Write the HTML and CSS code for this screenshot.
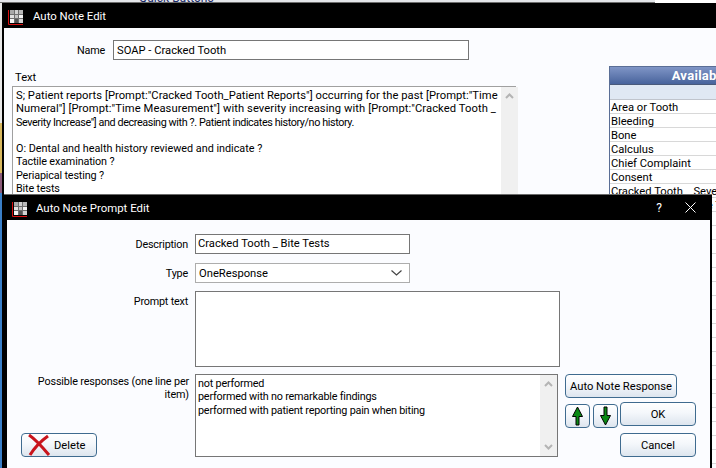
FILE: index.html
```html
<!DOCTYPE html>
<html>
	<head>
		<meta charset="UTF-8">
		<title>Auto Note Prompt Edit</title>
		<link rel="stylesheet" href="styles.css">
	</head>
	<body>
		<div class="desktop">
			<!--strip of the app behind the dialogs-->
			<div class="behind">
				<span class="behind-text">Quick Buttons</span>
			</div>
			<div class="behind-edge"></div>

			<!--Auto Note Edit-->
			<div class="window back">
				<div class="titlebar">
					<svg class="app-icon" width="15" height="15" viewBox="0 0 15 15"><use href="#logo"/></svg>
					<span class="title">Auto Note Edit</span>
				</div>
				<div class="back-body">
					<div class="back-left">
						<div class="name-row">
							<label class="name-label">Name</label>
							<div class="field name-field">SOAP - Cracked Tooth</div>
						</div>
						<div class="text-label">Text</div>
						<div class="note-box">
							<div class="note-text">
								<div class="note-line line-a">S; Patient reports [Prompt:"Cracked Tooth_Patient Reports"] occurring for the past [Prompt:"Time</div>
								<div class="note-line line-b">Numeral"] [Prompt:"Time Measurement"] with severity increasing with [Prompt:"Cracked Tooth _</div>
								<div class="note-line line-c">Severity Increase"] and decreasing with ?. Patient indicates history/no history.</div>
								<div class="note-line">&nbsp;</div>
								<div class="note-line line-e">O: Dental and health history reviewed and indicate ?</div>
								<div class="note-line line-d">Tactile examination ?</div>
								<div class="note-line line-d">Periapical testing ?</div>
								<div class="note-line line-d">Bite tests</div>
								<div class="note-line line-d">Percussion ?</div>
							</div>
							<div class="scrollbar">
								<svg width="9" height="6" viewBox="0 0 9 6"><path d="M1 5 L4.5 1.5 L8 5" fill="none" stroke="#b4b4b4" stroke-width="2"/></svg>
							</div>
						</div>
					</div>
					<div class="palette">
						<div class="palette-head">Available Prompts</div>
						<div class="palette-filter"></div>
						<div class="palette-row">Area or Tooth</div>
						<div class="palette-row">Bleeding</div>
						<div class="palette-row">Bone</div>
						<div class="palette-row">Calculus</div>
						<div class="palette-row">Chief Complaint</div>
						<div class="palette-row">Consent</div>
						<div class="palette-row">Cracked Tooth _ Severity Increase</div>
						<div class="palette-row">Cracked Tooth _ Bite Tests</div>
						<div class="palette-row"></div>
						<div class="palette-row"></div>
						<div class="palette-row"></div>
						<div class="palette-row"></div>
						<div class="palette-row"></div>
						<div class="palette-row"></div>
						<div class="palette-row"></div>
						<div class="palette-row"></div>
						<div class="palette-row"></div>
						<div class="palette-row"></div>
						<div class="palette-row"></div>
						<div class="palette-row"></div>
						<div class="palette-row"></div>
						<div class="palette-row"></div>
						<div class="palette-row"></div>
						<div class="palette-row"></div>
						<div class="palette-row"></div>
						<div class="palette-row"></div>
					</div>
				</div>
			</div>

			<!--Auto Note Prompt Edit-->
			<div class="window front">
				<div class="titlebar front-title">
					<svg class="app-icon" width="15" height="15" viewBox="0 0 15 15">
						<defs>
							<g id="logo">
								<rect x="2" y="0" width="13" height="13" fill="#6e6e6e"/>
								<rect x="2" y="0" width="4" height="4" fill="#a8a8a8"/>
								<rect x="7" y="0" width="3" height="4" fill="#d0d0d0"/>
								<rect x="11" y="0" width="4" height="4" fill="#b8b8b8"/>
								<rect x="2" y="5" width="4" height="3" fill="#e0e0e0"/>
								<rect x="7" y="5" width="3" height="3" fill="#c4c4c4"/>
								<rect x="11" y="5" width="4" height="3" fill="#f4f4f4"/>
								<rect x="2" y="9" width="4" height="4" fill="#f4f4f4"/>
								<rect x="7" y="9" width="3" height="4" fill="#555555"/>
								<rect x="11" y="9" width="4" height="4" fill="#d4d4d4"/>
								<path d="M0.5 0 V14.5 H15" fill="none" stroke="#d81010" stroke-width="1"/>
							</g>
						</defs>
						<use href="#logo"/>
					</svg>
					<span class="title">Auto Note Prompt Edit</span>
					<span class="help">?</span>
					<svg class="close" width="11" height="11" viewBox="0 0 11 11"><path d="M0.5 0.5 L10.5 10.5 M10.5 0.5 L0.5 10.5" stroke="#fff" stroke-width="1"/></svg>
				</div>
				<div class="front-body">
					<div class="row desc-row">
						<label class="row-label">Description</label>
						<div class="field desc-field">Cracked Tooth _ Bite Tests</div>
					</div>
					<div class="row type-row">
						<label class="row-label">Type</label>
						<div class="field type-field">
							<span>OneResponse</span>
							<svg width="11" height="6" viewBox="0 0 11 6"><path d="M0.5 0.5 L5.5 5 L10.5 0.5" fill="none" stroke="#444" stroke-width="1.2"/></svg>
						</div>
					</div>
					<div class="row prompt-row">
						<label class="row-label prompt-label">Prompt text</label>
						<div class="field prompt-field"></div>
					</div>
					<div class="row resp-row">
						<div class="resp-left">
							<label class="row-label resp-label">Possible responses (one line per item)</label>
							<button class="btn delete-btn">
								<svg width="24" height="22" viewBox="0 0 24 22"><path d="M2 1 C8 5 12 9 22 21 M21 2 C14 7 8 13 3 21" fill="none" stroke="#c8141c" stroke-width="3"/></svg>
								<span>Delete</span>
							</button>
						</div>
						<div class="field resp-field">
							<div class="resp-text">
								not performed<br>
								performed with no remarkable findings<br>
								performed with patient reporting pain when biting
							</div>
							<div class="scrollbar resp-scroll">
								<svg width="9" height="6" viewBox="0 0 9 6"><path d="M1 5 L4.5 1.5 L8 5" fill="none" stroke="#b4b4b4" stroke-width="2"/></svg>
								<svg width="9" height="6" viewBox="0 0 9 6"><path d="M1 1 L4.5 4.5 L8 1" fill="none" stroke="#b4b4b4" stroke-width="2"/></svg>
							</div>
						</div>
						<div class="btn-grid">
							<button class="btn auto-btn">Auto Note Response</button>
							<button class="btn arrow-btn">
								<svg width="15" height="20" viewBox="0 0 15 20"><path d="M7.5 1 L12.5 10.5 H9 V19 H6 V10.5 H2.5 Z" fill="#0a8a14" stroke="#000" stroke-width="1"/></svg>
							</button>
							<button class="btn arrow-btn">
								<svg width="15" height="20" viewBox="0 0 15 20"><path d="M7.5 19 L12.5 9.5 H9 V1 H6 V9.5 H2.5 Z" fill="#0a8a14" stroke="#000" stroke-width="1"/></svg>
							</button>
							<button class="btn ok-btn">OK</button>
							<button class="btn cancel-btn">Cancel</button>
						</div>
					</div>
				</div>
			</div>
		</div>
	</body>
</html>
```

FILE: styles.css
```css
*{
	margin: 0;
	padding: 0;
	box-sizing: border-box;
}

body{
	width: 716px;
	height: 468px;
	overflow: hidden;
	font-family: Roboto, "Liberation Sans", sans-serif;
	font-size: 11.2px;
	color: #000;
}

.desktop{
	width: 716px;
	height: 468px;
	position: relative;
	overflow: hidden;
	background: #fff;
}

/*app behind the dialogs*/
.behind{
	height: 3px;
	width: 655px;
	background: #e4e6ea;
	border-bottom: 1px solid #6e6e6e;
	overflow: hidden;
	position: relative;
}

.behind-text{
	position: absolute;
	left: 139px;
	top: -9px;
	font-size: 12px;
	color: #1a2a6a;
}

.behind-edge{
	position: absolute;
	left: 0;
	top: 3px;
	width: 2px;
	height: 465px;
	background: linear-gradient(#e8e8e8 0, #e8e8e8 120px, #d8b860 120px, #d8b860 170px, #8a5a7a 170px, #8a5a7a 190px, #3a7fc8 190px);
}

/*windows*/
.window{
	position: absolute;
	background: #000;
}

.back{
	left: 2px;
	top: 3px;
	width: 900px;
	height: 465px;
	padding: 0 0 0 2px;
}

.front{
	left: 4px;
	top: 194px;
	width: 708px;
	height: 274px;
	padding: 0 2px 0 3px;
	border-top: 1px solid #6a6a6a;
}

.titlebar{
	height: 25px;
	display: flex;
	align-items: center;
	color: #fff;
	font-size: 11.4px;
}

.front-title{
	margin-right: -2px;
}

.app-icon{
	margin-left: 4px;
	margin-top: 3px;
	flex: none;
}

.front-title .app-icon{
	margin-left: 5px;
}

.title{
	margin-left: 10px;
}

.front-title .title{
	margin-left: 9px;
}

.help{
	margin-left: auto;
	margin-right: 23px;
	font-size: 12px;
}

.close{
	margin-right: 16px;
}

/*back window*/
.back-body{
	background: #fbfcff;
	height: 440px;
	display: flex;
	overflow: hidden;
}

.back-left{
	width: 512px;
	margin-left: 8px;
	flex: none;
}

.name-row{
	display: flex;
	align-items: center;
	margin-top: 12px;
}

.name-label{
	width: 93px;
	text-align: right;
	margin-right: 8px;
	font-size: 10.8px;
	letter-spacing: -0.2px;
}

.field{
	background: #fff;
	border: 1px solid #767676;
}

.name-field{
	width: 356px;
	height: 20px;
	line-height: 19px;
	padding-left: 3px;
}

.text-label{
	margin-top: 11px;
	margin-left: 3px;
	line-height: 14px;
}

.note-box{
	display: flex;
	height: 120px;
	margin-top: 1px;
	width: 504px;
	background: #fff;
	border: 1px solid #a0a0a0;
}

.note-text{
	flex: 1;
	padding: 2px 3px;
	line-height: 13.3px;
}

.note-line{
	white-space: nowrap;
}

.line-a{
	letter-spacing: 0.03px;
}

.line-b{
	letter-spacing: 0.08px;
}

.line-c{
	font-size: 10.8px;
	letter-spacing: -0.4px;
}

.line-d{
	font-size: 10.8px;
	letter-spacing: -0.15px;
}

.line-e{
	font-size: 10.8px;
}

.scrollbar{
	width: 17px;
	flex: none;
	background: #f0f0f0;
	display: flex;
	flex-direction: column;
	align-items: center;
	padding-top: 6px;
}

/*right hand list*/
.palette{
	width: 236px;
	margin-left: 85px;
	margin-top: 38px;
	flex: none;
	border-left: 1px solid #5a6e96;
}

.palette-head{
	height: 19px;
	line-height: 18px;
	text-align: center;
	color: #fff;
	font-weight: bold;
	font-size: 13px;
	letter-spacing: 0.3px;
	background: linear-gradient(#7f95c6, #48639c);
	border-top: 1px solid #5a6e96;
	border-bottom: 1px solid #4a5a7a;
}

.palette-filter{
	height: 15px;
	background: #e0e8f3;
	border-bottom: 1px solid #c0c4cc;
}

.palette-row{
	height: 14px;
	line-height: 14px;
	padding: 1px 0 0 1px;
	background: #fff;
	border-bottom: 1px solid #d8d8d8;
}

/*front window*/
.front-body{
	background: #fbfcff;
	height: 249px;
	padding-top: 14px;
}

.row{
	display: flex;
}

.row-label{
	width: 181px;
	text-align: right;
	flex: none;
	margin-right: 7px;
	font-size: 10.8px;
	letter-spacing: -0.2px;
}

.desc-row, .type-row{
	align-items: center;
}

.desc-field{
	width: 215px;
	height: 20px;
	line-height: 18px;
	padding-left: 2px;
}

.type-row{
	margin-top: 9px;
}

.type-field{
	width: 215px;
	height: 20px;
	line-height: 19px;
	padding: 0 7px 0 3px;
	border-color: #adadad;
	display: flex;
	align-items: center;
	justify-content: space-between;
}

.prompt-row{
	margin-top: 8px;
}

.prompt-label{
	margin-top: 4px;
}

.prompt-field{
	width: 365px;
	height: 76px;
}

.resp-row{
	margin-top: 7px;
	height: 83px;
}

.resp-left{
	width: 181px;
	flex: none;
	margin-right: 7px;
	display: flex;
	flex-direction: column;
	justify-content: space-between;
	align-items: flex-end;
}

.resp-label{
	width: 160px;
	margin-right: -1px;
	margin-top: 1px;
	line-height: 13px;
	letter-spacing: -0.14px;
}

.resp-field{
	width: 363px;
	display: flex;
}

.resp-text{
	flex: 1;
	padding: 2px 2px;
	line-height: 13.3px;
	font-size: 10.8px;
	letter-spacing: -0.2px;
}

.resp-scroll{
	justify-content: space-between;
	padding: 6px 0;
}

.btn{
	font-family: inherit;
	font-size: 11.2px;
	color: #000;
	border: 1px solid #3f6b8f;
	border-radius: 4px;
	background: linear-gradient(#ffffff, #f4f7fb 45%, #dde5ee);
	display: flex;
	align-items: center;
	justify-content: center;
}

.delete-btn{
	align-self: flex-start;
	margin-left: 14px;
	width: 76px;
	height: 24px;
	justify-content: flex-start;
	padding-left: 5px;
	gap: 3px;
}

.btn-grid{
	display: grid;
	grid-template-columns: 25px 25px 76px;
	grid-template-rows: 24px 26px 24px;
	column-gap: 3px;
	row-gap: 4px;
	margin-left: 7px;
	width: 132px;
	align-items: start;
}

.auto-btn{
	grid-column: 1 / 4;
	width: 112px;
	height: 24px;
}

.arrow-btn{
	width: 25px;
	height: 24px;
	margin-top: 2px;
}

.ok-btn{
	width: 76px;
	height: 24px;
	margin-left: -1px;
}

.cancel-btn{
	grid-column: 3;
	width: 76px;
	height: 24px;
	margin-left: -1px;
	margin-top: 1px;
}
```
